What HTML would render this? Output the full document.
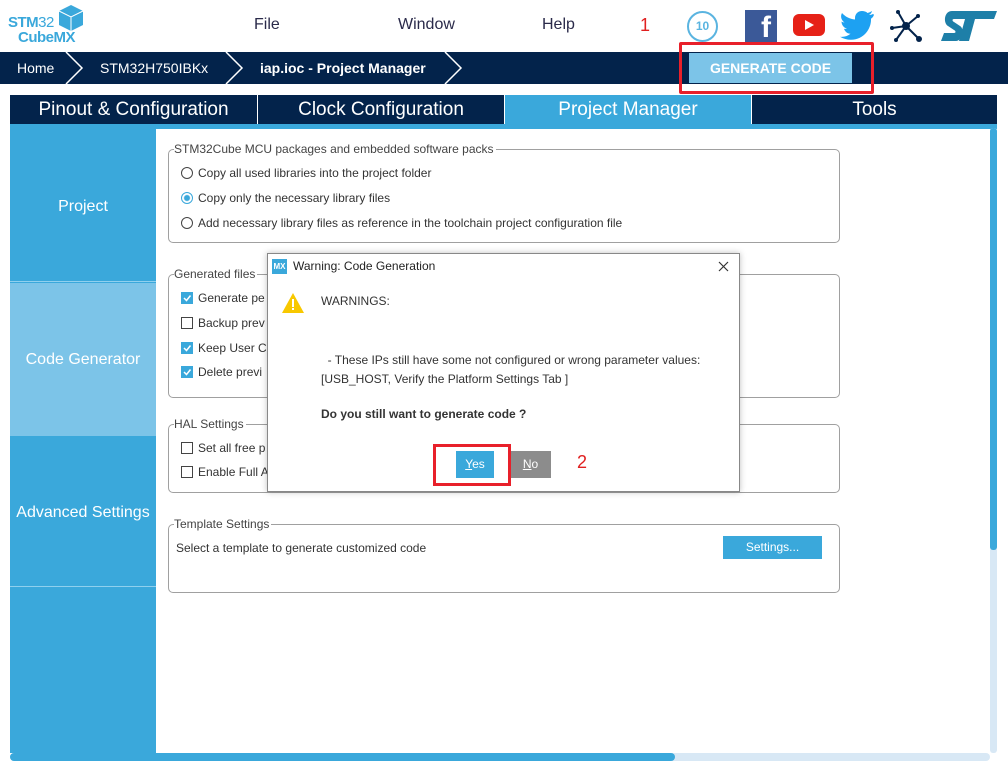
<!DOCTYPE html>
<html><head><style>
*{margin:0;padding:0;box-sizing:border-box}
body{width:1008px;height:771px;background:#fff;font-family:"Liberation Sans",sans-serif;position:relative;overflow:hidden;color:#333}
.a{position:absolute}
.menu{font-size:16px;color:#2a2a4a;top:16px}
.bc{top:52px;left:0;width:1008px;height:32px;background:#03234b}
.tab{top:95px;height:29px;color:#fff;font-size:19px;text-align:center;line-height:29px;background:#03234b}
.side{left:10px;width:146px;color:#fff;font-size:16px;text-align:center}
.grp{border:1px solid #a0a0a0;border-radius:5px;left:168px;width:672px}
.lg{top:-8px;left:5px;background:#fff;font-size:12px;padding-right:2px;color:#444}
.it{font-size:12px;left:12px;color:#333}
.cb{display:inline-block;width:12px;height:12px;border:1px solid #444;vertical-align:middle;margin-right:5px;background:#fff;position:relative;top:-1px}
.cbk{background:#3aa8db;border-color:#3aa8db}
.cbk svg{position:absolute;left:0;top:0}
.rb{display:inline-block;width:12px;height:12px;border:1px solid #444;border-radius:50%;vertical-align:middle;margin-right:5px;position:relative;top:-1px}
</style></head><body>
<!-- logo -->
<div class="a" style="left:8px;top:15px;color:#3aa8db;font-weight:bold;font-size:15px;line-height:15px;letter-spacing:-0.5px">STM<span style="font-weight:normal">32</span><br><span style="margin-left:10px">CubeMX</span></div>
<svg class="a" style="left:58px;top:4px" width="26" height="28" viewBox="0 0 26 28"><path d="M13 1L25 7V21L13 27L1 21V7Z" fill="#3aa8db"/><path d="M1 7L13 13L25 7M13 13V27" stroke="#fff" stroke-width="1" fill="none"/></svg>
<div class="a menu" style="left:254px">File</div>
<div class="a menu" style="left:398px">Window</div>
<div class="a menu" style="left:542px">Help</div>
<div class="a" style="left:640px;top:15px;color:#e02020;font-size:18px">1</div>
<div class="a" style="left:687px;top:11px;width:31px;height:31px;border:2px solid #5ab4e0;border-radius:50%;color:#5ab4e0;font-weight:bold;font-size:12px;text-align:center;line-height:26px">10</div>
<div class="a" style="left:745px;top:10px;width:32px;height:32px;background:#3b5998;color:#fff;font-weight:bold;font-size:30px;text-align:right;padding-right:6px;line-height:36px;overflow:hidden">f</div>
<div class="a" style="left:793px;top:14px;width:32px;height:22px;background:#e62117;border-radius:6px"></div>
<svg class="a" style="left:803px;top:19px" width="12" height="12"><path d="M2 1L11 6L2 11Z" fill="#fff"/></svg>
<svg class="a" style="left:840px;top:10px" width="34" height="30" viewBox="0 0 34 30"><path d="M33 4c-1 .5-2.5 1-4 1 1.5-1 2.5-2 3-4-1.5 1-3 1.5-4.5 2C26 1.5 24 1 22 1c-4 0-7 3-7 7v1.5C9.5 9 5 6.5 2 3c-2 3.5-.5 7.5 2.5 9.5-1 0-2-.5-3-1 0 3.5 2.5 6.5 5.5 7-1 .5-2 .5-3 .2 1 3 3.5 5 6.5 5-3 2.5-7 3.5-10.5 3 3.5 2 7 3 11 3 13 0 20-11 20-20v-1c1.5-1 2.5-2.5 3-4z" fill="#1da1f2"/></svg>
<svg class="a" style="left:888px;top:8px" width="36" height="36"><g stroke="#03234b" stroke-width="2"><line x1="18" y1="18" x2="4" y2="20"/><line x1="18" y1="18" x2="10" y2="4"/><line x1="18" y1="18" x2="30" y2="8"/><line x1="18" y1="18" x2="31" y2="31"/><line x1="18" y1="18" x2="8" y2="32"/></g><g fill="#03234b"><circle cx="18" cy="18" r="4"/><circle cx="31" cy="31" r="3"/><circle cx="10" cy="4" r="2"/><circle cx="30" cy="8" r="2"/><circle cx="4" cy="20" r="2"/><circle cx="8" cy="32" r="2"/></g></svg>
<svg class="a" style="left:940px;top:10px" width="58" height="32" viewBox="0 0 58 32"><path d="M12 1H57L54 9H35L29 31H19L25 9H14C12 9 12 11 14 12L20 16C25 19 22 31 16 31H1L4 23H14C16 23 16 21 14 20L8 16C3 13 4 1 12 1Z" fill="#1e7fa8"/></svg>
<!-- breadcrumb -->
<div class="a bc"></div>
<svg class="a" style="left:0;top:52px" width="470" height="32"><g stroke="#fff" stroke-width="1.5" fill="none"><path d="M66 0L82 16L66 32"/><path d="M226 0L242 16L226 32"/><path d="M445 0L461 16L445 32"/></g></svg>
<div class="a" style="left:17px;top:60px;color:#fff;font-size:14px">Home</div>
<div class="a" style="left:100px;top:60px;color:#fff;font-size:14px">STM32H750IBKx</div>
<div class="a" style="left:260px;top:60px;color:#fff;font-size:14px;font-weight:bold">iap.ioc - Project Manager</div>
<div class="a" style="left:689px;top:53px;width:163px;height:30px;background:#7cc4e8;color:#fff;font-weight:bold;font-size:14px;text-align:center;line-height:30px">GENERATE CODE</div>
<div class="a" style="left:679px;top:42px;width:195px;height:52px;border:3px solid #e8202a;border-radius:2px"></div>
<!-- tabs -->
<div class="a tab" style="left:10px;width:247px">Pinout &amp; Configuration</div>
<div class="a tab" style="left:258px;width:246px">Clock Configuration</div>
<div class="a tab" style="left:505px;width:246px;background:#3aa8db">Project Manager</div>
<div class="a tab" style="left:752px;width:245px">Tools</div>
<div class="a" style="left:10px;top:124px;width:987px;height:5px;background:#3aa8db"></div>
<!-- sidebar -->
<div class="a" style="left:10px;top:128px;width:146px;height:625px;background:#3aa8db"></div>
<div class="a side" style="top:198px">Project</div>
<div class="a" style="left:10px;top:281px;width:146px;height:1px;background:#8fd0ee"></div>
<div class="a" style="left:10px;top:283px;width:146px;height:153px;background:#7cc4e8"></div>
<div class="a side" style="top:351px">Code Generator</div>
<div class="a side" style="top:504px">Advanced Settings</div>
<div class="a" style="left:10px;top:586px;width:146px;height:1px;background:#8fd0ee"></div>
<!-- groups -->
<div class="a grp" style="top:149px;height:94px"><div class="a lg">STM32Cube MCU packages and embedded software packs</div>
<div class="a it" style="top:16px"><span class="rb"></span>Copy all used libraries into the project folder</div>
<div class="a it" style="top:41px"><span class="rb" style="border-color:#3aa8db;background:radial-gradient(#3aa8db 2.5px,#fff 3.5px)"></span>Copy only the necessary library files</div>
<div class="a it" style="top:66px"><span class="rb"></span>Add necessary library files as reference in the toolchain project configuration file</div></div>
<div class="a grp" style="top:274px;height:124px"><div class="a lg">Generated files</div>
<div class="a it" style="top:16px"><span class="cb cbk"><svg width="10" height="10"><path d="M2 5L4.5 7.5L8.5 2.5" stroke="#fff" stroke-width="1.5" fill="none"/></svg></span>Generate pe</div>
<div class="a it" style="top:41px"><span class="cb"></span>Backup prev</div>
<div class="a it" style="top:66px"><span class="cb cbk"><svg width="10" height="10"><path d="M2 5L4.5 7.5L8.5 2.5" stroke="#fff" stroke-width="1.5" fill="none"/></svg></span>Keep User C</div>
<div class="a it" style="top:90px"><span class="cb cbk"><svg width="10" height="10"><path d="M2 5L4.5 7.5L8.5 2.5" stroke="#fff" stroke-width="1.5" fill="none"/></svg></span>Delete previ</div></div>
<div class="a grp" style="top:424px;height:69px"><div class="a lg">HAL Settings</div>
<div class="a it" style="top:16px"><span class="cb"></span>Set all free p</div>
<div class="a it" style="top:40px"><span class="cb"></span>Enable Full A</div></div>
<div class="a grp" style="top:524px;height:69px"><div class="a lg">Template Settings</div>
<div class="a it" style="top:16px;left:7px">Select a template to generate customized code</div>
<div class="a" style="left:554px;top:11px;width:99px;height:23px;background:#3aa8db;color:#fff;font-size:12px;text-align:center;line-height:23px">Settings...</div></div>
<!-- scrollbars -->
<div class="a" style="left:990px;top:128px;width:7px;height:625px;background:#d8e8f5;border-radius:3px"></div>
<div class="a" style="left:990px;top:128px;width:7px;height:422px;background:#3aa8db;border-radius:3px"></div>
<div class="a" style="left:10px;top:753px;width:980px;height:8px;background:#d8e8f5;border-radius:4px"></div>
<div class="a" style="left:10px;top:753px;width:665px;height:8px;background:#3aa8db;border-radius:4px"></div>
<!-- dialog -->
<div class="a" style="left:267px;top:253px;width:473px;height:239px;background:#fff;border:1px solid #888;box-shadow:0 0 6px rgba(0,0,0,.25)">
<div class="a" style="left:4px;top:5px;width:15px;height:15px;background:#3aa8db;color:#fff;font-size:8px;font-weight:bold;text-align:center;line-height:15px">MX</div>
<div class="a" style="left:25px;top:5px;font-size:12px;color:#222">Warning: Code Generation</div>
<svg class="a" style="left:450px;top:7px" width="11" height="11"><path d="M1 1L10 10M10 1L1 10" stroke="#333" stroke-width="1.2"/></svg>
<svg class="a" style="left:13px;top:38px" width="24" height="22"><path d="M12 1L23 21H1Z" fill="#f8c800"/><rect x="11" y="7" width="2" height="8" fill="#fff"/><rect x="11" y="16" width="2" height="2" fill="#fff"/></svg>
<div class="a" style="left:53px;top:40px;font-size:12px">WARNINGS:</div>
<div class="a" style="left:53px;top:97px;font-size:12px;line-height:19px">&nbsp;&nbsp;- These IPs still have some not configured or wrong parameter values:<br>[USB_HOST, Verify the Platform Settings Tab ]</div>
<div class="a" style="left:53px;top:153px;font-size:12px;font-weight:bold">Do you still want to generate code ?</div>
<div class="a" style="left:188px;top:197px;width:38px;height:27px;background:#3aa8db;color:#fff;font-size:12px;text-align:center;line-height:27px"><u>Y</u>es</div>
<div class="a" style="left:242px;top:197px;width:41px;height:27px;background:#8c8c8c;color:#fff;font-size:12px;text-align:center;line-height:27px"><u>N</u>o</div>
<div class="a" style="left:165px;top:190px;width:78px;height:42px;border:3px solid #e8202a"></div>
<div class="a" style="left:309px;top:198px;color:#e02020;font-size:18px">2</div>
</div>
</body></html>
